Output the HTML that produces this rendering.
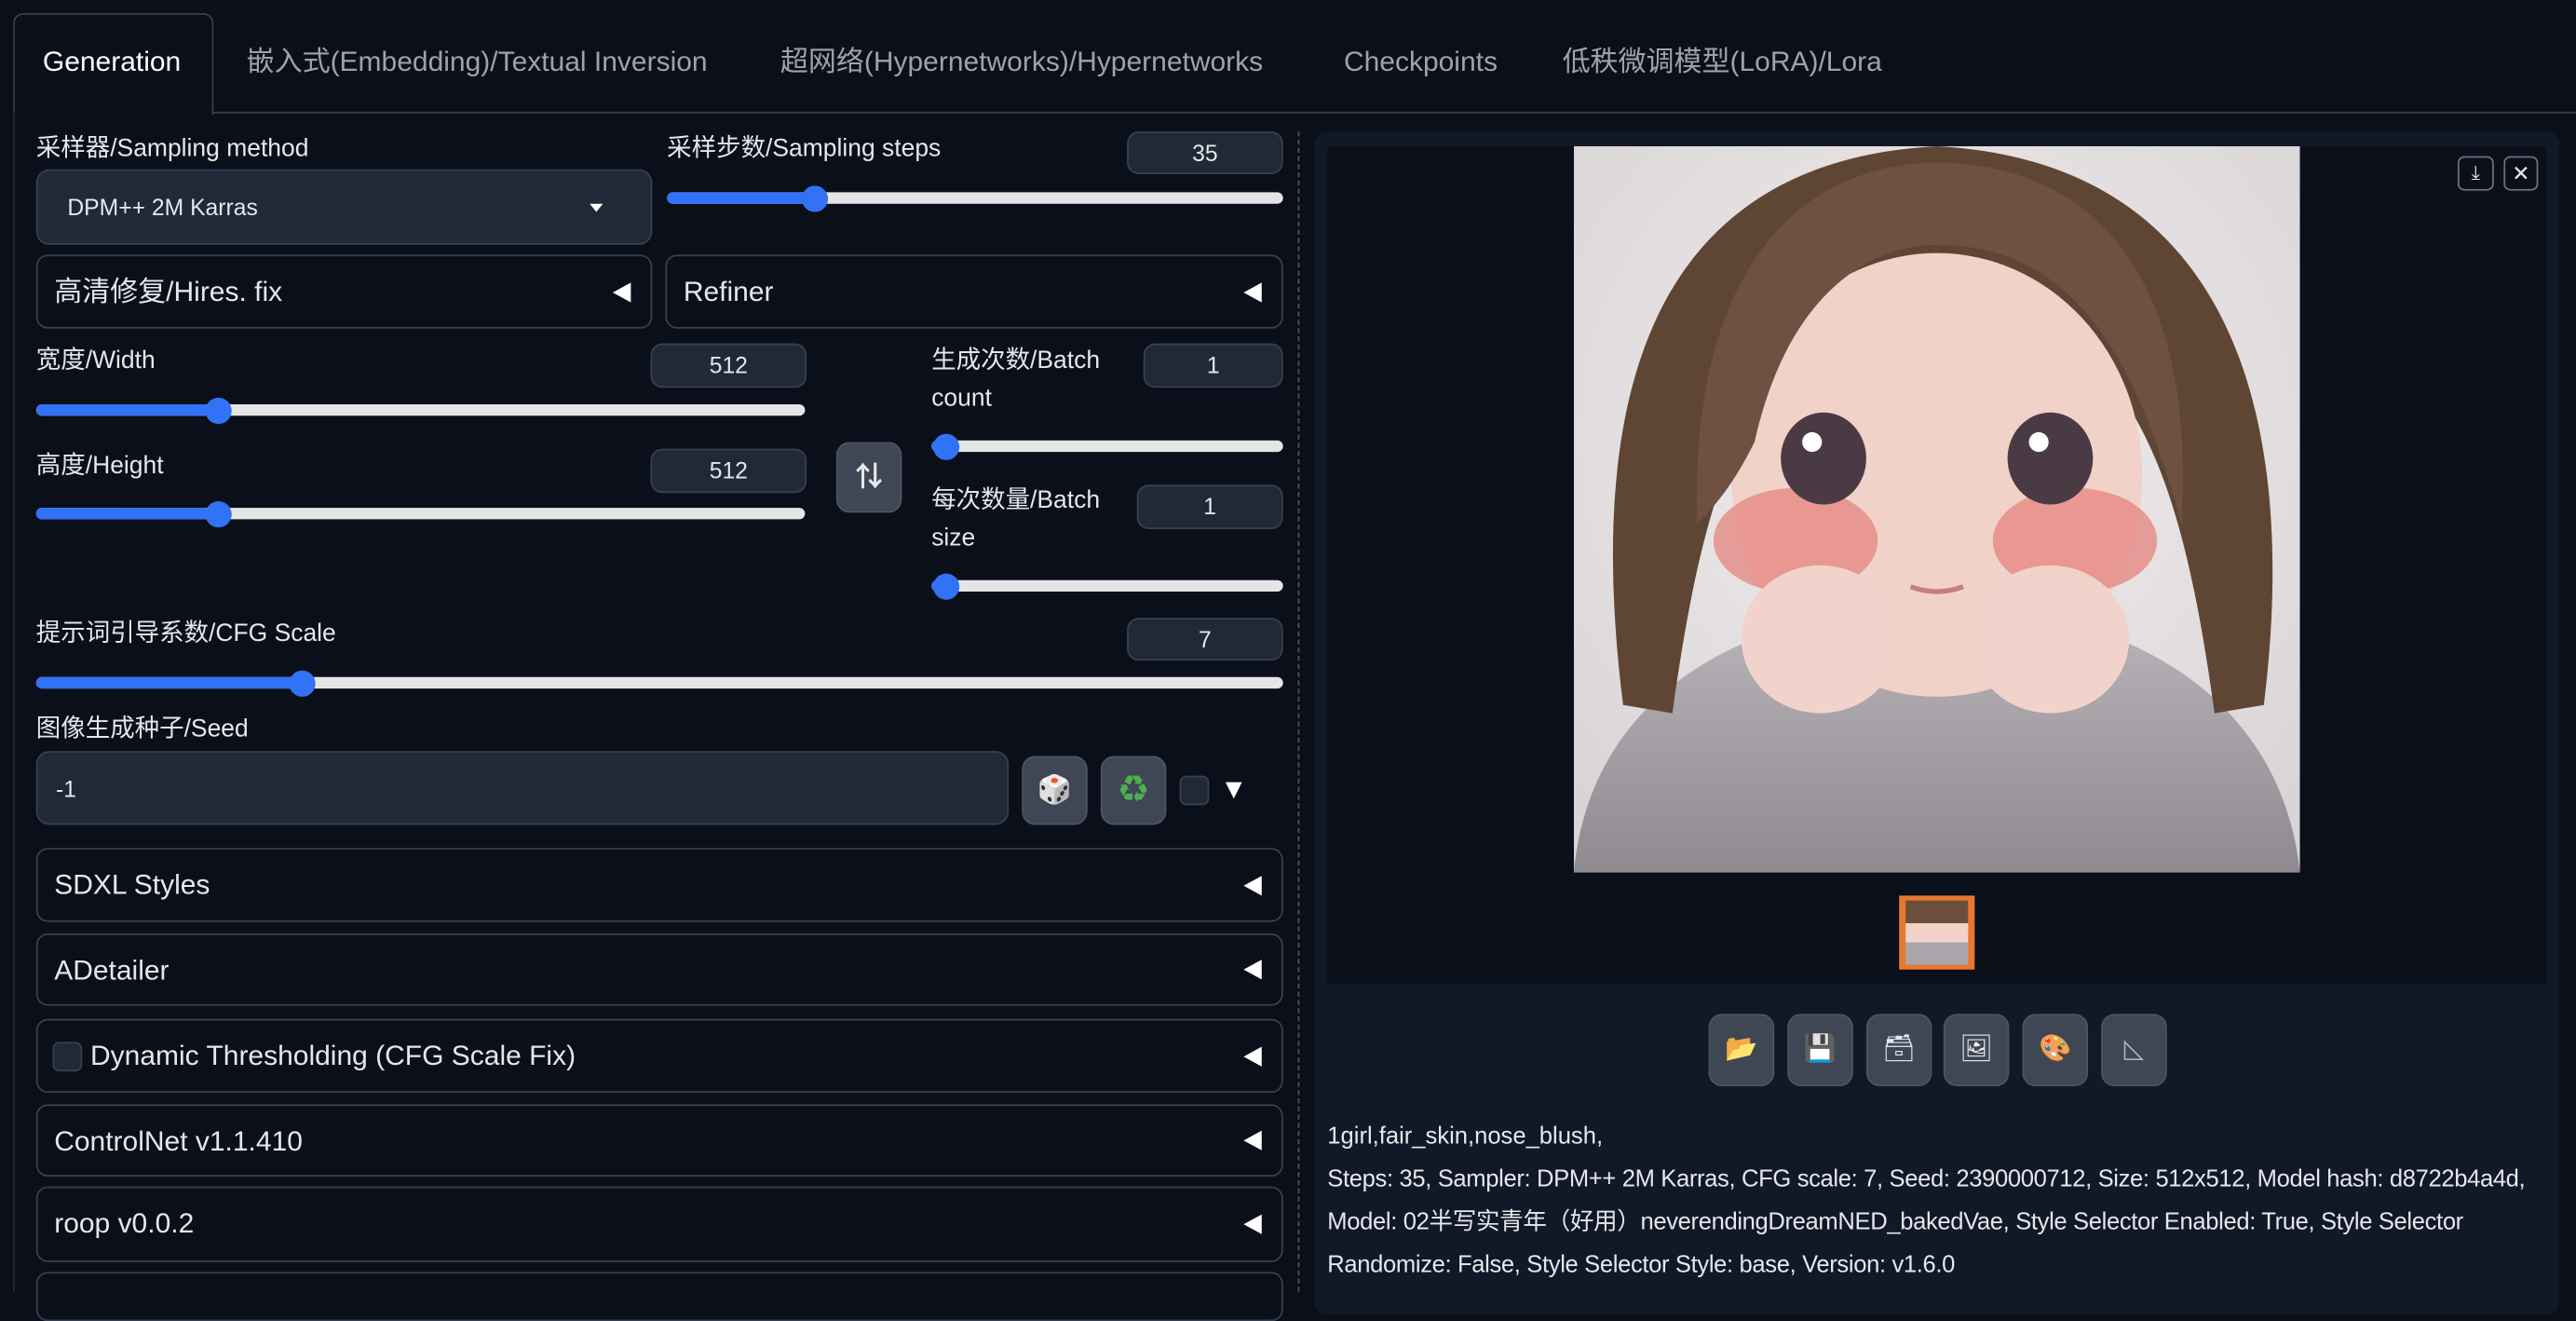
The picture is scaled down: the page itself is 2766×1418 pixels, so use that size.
<!DOCTYPE html>
<html><head><meta charset="utf-8"><style>
html,body{margin:0;padding:0;background:#0b0f19;overflow:hidden;width:2766px;height:1386px}
#w{position:absolute;left:0;top:0;width:1568px;height:786px;transform:scale(1.7640);transform-origin:0 0;font-family:"Liberation Sans","Noto Sans CJK SC",sans-serif;color:#e5e7eb}
.a{position:absolute;box-sizing:border-box}
.t{position:absolute;white-space:nowrap;font-size:15px;line-height:18px}
.tab{position:absolute;top:28px;font-size:17px;line-height:20px;height:20px;color:#9ca3af;white-space:nowrap}
.num{position:absolute;box-sizing:border-box;background:#1f2937;border:1px solid #374151;border-radius:7px;font-size:14px;text-align:center;line-height:24px;color:#e5e7eb}
.tr{position:absolute;height:7px;border-radius:4px;background:#e5e5e5}
.fi{position:absolute;left:0;top:0;height:7px;border-radius:4px;background:#3172f6}
.th{position:absolute;top:-4.5px;width:16px;height:16px;border-radius:50%;background:#3172f6;margin-left:-8px}
.acc{position:absolute;box-sizing:border-box;border:1px solid #374151;border-radius:7px;background:#0b0f19;font-size:17px;line-height:44px;padding-left:10px}
.acc:after{content:"";position:absolute;right:12px;top:50%;margin-top:-6px;border-right:11px solid #fff;border-top:6px solid transparent;border-bottom:6px solid transparent}
.btn{position:absolute;box-sizing:border-box;background:#3f4654;border:1px solid #4b5563;border-radius:8px;text-align:center;font-size:17px}
</style></head><body><div id="w">
<div class="a" style="left:8px;top:8px;width:122px;height:62px;border:1px solid #374151;border-bottom:none;border-radius:6px 6px 0 0;background:#0b0f19"></div>
<div class="a" style="left:129px;top:68px;width:1439px;height:1px;background:#374151"></div>
<div class="a" style="left:8px;top:68px;width:1px;height:718px;background:#1f2937"></div>
<div class="tab" style="left:26px;color:#fff">Generation</div>
<div class="tab" style="left:150px">嵌入式(Embedding)/Textual Inversion</div>
<div class="tab" style="left:475px">超网络(Hypernetworks)/Hypernetworks</div>
<div class="tab" style="left:818px">Checkpoints</div>
<div class="tab" style="left:951px">低秩微调模型(LoRA)/Lora</div>

<div class="t" style="left:22px;top:82px">采样器/Sampling method</div>
<div class="a" style="left:22px;top:103px;width:375px;height:46px;background:#1f2937;border:1px solid #374151;border-radius:8px"></div>
<div class="t" style="left:41px;top:117px;font-size:14px">DPM++ 2M Karras</div>
<div class="a" style="left:359px;top:124px;border-top:5px solid #fff;border-left:4px solid transparent;border-right:4px solid transparent"></div>
<div class="t" style="left:406px;top:82px">采样步数/Sampling steps</div>
<div class="num" style="left:686px;top:80px;width:95px;height:26px">35</div>
<div class="tr" style="left:406px;top:117px;width:375px"><div class="fi" style="width:90px"></div><div class="th" style="left:90px"></div></div>

<div class="acc" style="left:22px;top:155px;width:375px;height:45px">高清修复/Hires. fix</div>
<div class="acc" style="left:405px;top:155px;width:376px;height:45px">Refiner</div>

<div class="t" style="left:22px;top:211px">宽度/Width</div>
<div class="num" style="left:396px;top:209px;width:95px;height:27px">512</div>
<div class="tr" style="left:22px;top:246px;width:468px"><div class="fi" style="width:111px"></div><div class="th" style="left:111px"></div></div>
<div class="t" style="left:22px;top:275px">高度/Height</div>
<div class="num" style="left:396px;top:273px;width:95px;height:27px">512</div>
<div class="tr" style="left:22px;top:309px;width:468px"><div class="fi" style="width:111px"></div><div class="th" style="left:111px"></div></div>
<div class="btn" style="left:509px;top:269px;width:40px;height:43px;line-height:41px;font-weight:bold">⇅</div>

<div class="t" style="left:567px;top:211px">生成次数/Batch</div>
<div class="t" style="left:567px;top:234px">count</div>
<div class="num" style="left:696px;top:209px;width:85px;height:27px">1</div>
<div class="tr" style="left:567px;top:268px;width:214px"><div class="fi" style="width:9px"></div><div class="th" style="left:9px"></div></div>
<div class="t" style="left:567px;top:296px">每次数量/Batch</div>
<div class="t" style="left:567px;top:319px">size</div>
<div class="num" style="left:692px;top:295px;width:89px;height:27px">1</div>
<div class="tr" style="left:567px;top:353px;width:214px"><div class="fi" style="width:9px"></div><div class="th" style="left:9px"></div></div>

<div class="t" style="left:22px;top:377px">提示词引导系数/CFG Scale</div>
<div class="num" style="left:686px;top:376px;width:95px;height:26px">7</div>
<div class="tr" style="left:22px;top:412px;width:759px"><div class="fi" style="width:162px"></div><div class="th" style="left:162px"></div></div>

<div class="t" style="left:22px;top:435px">图像生成种子/Seed</div>
<div class="a" style="left:22px;top:457px;width:592px;height:45px;background:#1f2937;border:1px solid #374151;border-radius:8px"></div>
<div class="t" style="left:34px;top:471px;font-size:14px">-1</div>
<div class="btn" style="left:622px;top:460px;width:40px;height:42px;line-height:40px">🎲</div>
<div class="btn" style="left:670px;top:460px;width:40px;height:42px;line-height:40px;color:#4caf50">♻</div>
<div class="a" style="left:718px;top:472px;width:18px;height:18px;background:#1f2937;border:1px solid #374151;border-radius:4px"></div>
<div class="a" style="left:746px;top:476px;border-top:10px solid #fff;border-left:5px solid transparent;border-right:5px solid transparent"></div>

<div class="acc" style="left:22px;top:516px;width:759px;height:45px">SDXL Styles</div>
<div class="acc" style="left:22px;top:568px;width:759px;height:44px">ADetailer</div>
<div class="acc" style="left:22px;top:620px;width:759px;height:45px;padding-left:32px">Dynamic Thresholding (CFG Scale Fix)</div>
<div class="a" style="left:32px;top:634px;width:18px;height:18px;background:#1f2937;border:1px solid #374151;border-radius:4px"></div>
<div class="acc" style="left:22px;top:672px;width:759px;height:44px">ControlNet v1.1.410</div>
<div class="acc" style="left:22px;top:722px;width:759px;height:46px">roop v0.0.2</div>
<div class="a" style="left:22px;top:774px;width:759px;height:30px;border:1px solid #374151;border-radius:7px"></div>

<div class="a" style="left:790px;top:80px;width:0;height:706px;border-left:1px dashed #4b5563"></div>

<div class="a" style="left:800px;top:80px;width:758px;height:720px;background:#111827;border-radius:8px"></div>
<div class="a" style="left:808px;top:89px;width:742px;height:510px;background:#0b0f19"></div>
<svg class="a" style="left:958px;top:89px" width="442" height="442" viewBox="0 0 442 442">
<defs><radialGradient id="bg" cx="50%" cy="40%" r="70%"><stop offset="0" stop-color="#f3eeee"/><stop offset="1" stop-color="#d9d4d6"/></radialGradient>
<linearGradient id="sw" x1="0" y1="0" x2="0" y2="1"><stop offset="0" stop-color="#b9b5b9"/><stop offset="1" stop-color="#8e8a90"/></linearGradient></defs>
<rect width="442" height="442" fill="url(#bg)"/>
<path d="M0 442 C10 330 110 280 221 280 C330 280 430 330 442 442Z" fill="url(#sw)"/>
<path d="M30 340 C10 180 30 10 221 0 C410 10 440 180 420 340 L390 345 C370 200 340 100 221 90 C110 100 80 200 60 345Z" fill="#5f4634"/>
<ellipse cx="221" cy="200" rx="125" ry="135" fill="#f1d2c8"/>
<ellipse cx="135" cy="240" rx="50" ry="32" fill="#e4847f" opacity=".75"/>
<ellipse cx="305" cy="240" rx="50" ry="32" fill="#e4847f" opacity=".75"/>
<path d="M75 230 C70 60 150 10 221 10 C300 10 380 60 370 230 C340 120 300 60 221 60 C180 60 130 90 110 180 C100 200 90 215 75 230Z" fill="#6e5140"/>
<ellipse cx="152" cy="190" rx="26" ry="28" fill="#4a3a44"/><ellipse cx="290" cy="190" rx="26" ry="28" fill="#4a3a44"/>
<circle cx="145" cy="180" r="6" fill="#fff"/><circle cx="283" cy="180" r="6" fill="#fff"/>
<path d="M205 268 Q221 274 237 268" stroke="#c48080" stroke-width="3" fill="none"/>
<ellipse cx="150" cy="300" rx="48" ry="45" fill="#f2d3cb"/><ellipse cx="290" cy="300" rx="48" ry="45" fill="#f2d3cb"/>
</svg>
<div class="a" style="left:1496px;top:95px;width:22px;height:21px;border:1px solid #6b7280;border-radius:4px;font-size:12px;text-align:center;line-height:19px">⤓</div>
<div class="a" style="left:1524px;top:95px;width:21px;height:21px;border:1px solid #6b7280;border-radius:4px;font-size:13px;text-align:center;line-height:19px">✕</div>
<div class="a" style="left:1156px;top:545px;width:46px;height:45px;background:#e8782f;padding:3px 4px"><div style="width:100%;height:100%;background:linear-gradient(#6b4f3c 0 35%,#f1d2c8 35% 65%,#a9a5aa 65%)"></div></div>

<div class="btn" style="left:1040px;top:617px;width:40px;height:44px;line-height:42px;font-size:16px">📂</div>
<div class="btn" style="left:1088px;top:617px;width:40px;height:44px;line-height:42px;font-size:16px">💾</div>
<div class="btn" style="left:1136px;top:617px;width:40px;height:44px;line-height:42px;font-size:16px">🗃</div>
<div class="btn" style="left:1183px;top:617px;width:40px;height:44px;line-height:42px;font-size:16px">🖼</div>
<div class="btn" style="left:1231px;top:617px;width:40px;height:44px;line-height:42px;font-size:16px">🎨</div>
<div class="btn" style="left:1279px;top:617px;width:40px;height:44px;line-height:42px;font-size:16px;color:#a5b4cc">◺</div>

<div class="t" style="left:808px;top:683px;font-size:14.5px">1girl,fair_skin,nose_blush,</div>
<div class="t" style="left:808px;top:709px;font-size:14.5px;letter-spacing:-.2px">Steps: 35, Sampler: DPM++ 2M Karras, CFG scale: 7, Seed: 2390000712, Size: 512x512, Model hash: d8722b4a4d,</div>
<div class="t" style="left:808px;top:735px;font-size:14.5px;letter-spacing:-.2px">Model: 02半写实青年（好用）neverendingDreamNED_bakedVae, Style Selector Enabled: True, Style Selector</div>
<div class="t" style="left:808px;top:761px;font-size:14.5px;letter-spacing:-.2px">Randomize: False, Style Selector Style: base, Version: v1.6.0</div>
</div></body></html>
